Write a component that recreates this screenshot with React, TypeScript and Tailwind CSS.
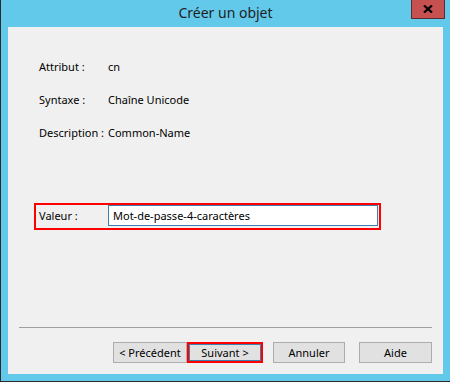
import React from "react";

export default function App() {
  const font = { fontFamily: '"Noto Sans", "Open Sans", sans-serif' };
  return (
    <div
      className="w-[450px] h-[382px] bg-[#63c9eb] border-l border-b border-[#2b2b2b] flex flex-col text-[#000] overflow-hidden"
      style={font}
    >
      {/* title bar */}
      <div className="relative h-[27px] flex items-center justify-center shrink-0">
        <span className="text-[14px] text-[#1e1e1e] leading-none -mt-[1px]">
          Créer un objet
        </span>
        <div className="absolute top-0 left-[410px] w-[34px] h-[19px] bg-[#c75050] border border-t-0 border-[#5c2b2b] flex items-center justify-center">
          <svg width="10" height="8" viewBox="0 0 10 8">
            <path d="M1 0.5 L9 7.5 M9 0.5 L1 7.5" stroke="#000" strokeWidth="2.2" />
          </svg>
        </div>
      </div>

      {/* client */}
      <div className="ml-[7px] mr-[7px] h-[347px] bg-[#f0f0f0] flex flex-col text-[11px] leading-[16px] whitespace-nowrap">
        <div className="flex flex-col pl-[31px] pt-[32px] gap-[17px]">
          <div className="flex">
            <span className="w-[69px]">Attribut :</span>
            <span>cn</span>
          </div>
          <div className="flex">
            <span className="w-[69px]">Syntaxe :</span>
            <span>Chaîne Unicode</span>
          </div>
          <div className="flex">
            <span className="w-[69px]">Description :</span>
            <span>Common-Name</span>
          </div>
        </div>

        <div className="ml-[26px] mt-[62px] w-[347px] h-[27px] border-2 border-[#ff0000] flex items-start">
          <span className="pl-[3px] w-[72px] mt-[3px]">Valeur :</span>
          <div className="w-[270px] h-[21px] bg-white border border-[#3c7fb1] flex items-center pl-[4px]">
            Mot-de-passe-4-caractères
          </div>
        </div>

        <div className="ml-[11px] mt-[97px] w-[413px] h-px bg-[#a0a0a0]" />

        <div className="flex mt-[14px] ml-[105px]">
          <button className="w-[74px] h-[21px] bg-[#e1e1e1] border border-[#adadad] flex items-center justify-center">
            &lt; Précédent
          </button>
          <div className="w-[76px] h-[21px] border-2 border-[#ff0000] flex">
            <button className="flex-1 bg-[#e1e1e1] border border-[#3c7fb1] flex items-center justify-center">
              Suivant &gt;
            </button>
          </div>
          <button className="ml-[10px] w-[72px] h-[21px] bg-[#e1e1e1] border border-[#adadad] flex items-center justify-center">
            Annuler
          </button>
          <button className="ml-[14px] w-[73px] h-[21px] bg-[#e1e1e1] border border-[#adadad] flex items-center justify-center">
            Aide
          </button>
        </div>
      </div>
    </div>
  );
}
